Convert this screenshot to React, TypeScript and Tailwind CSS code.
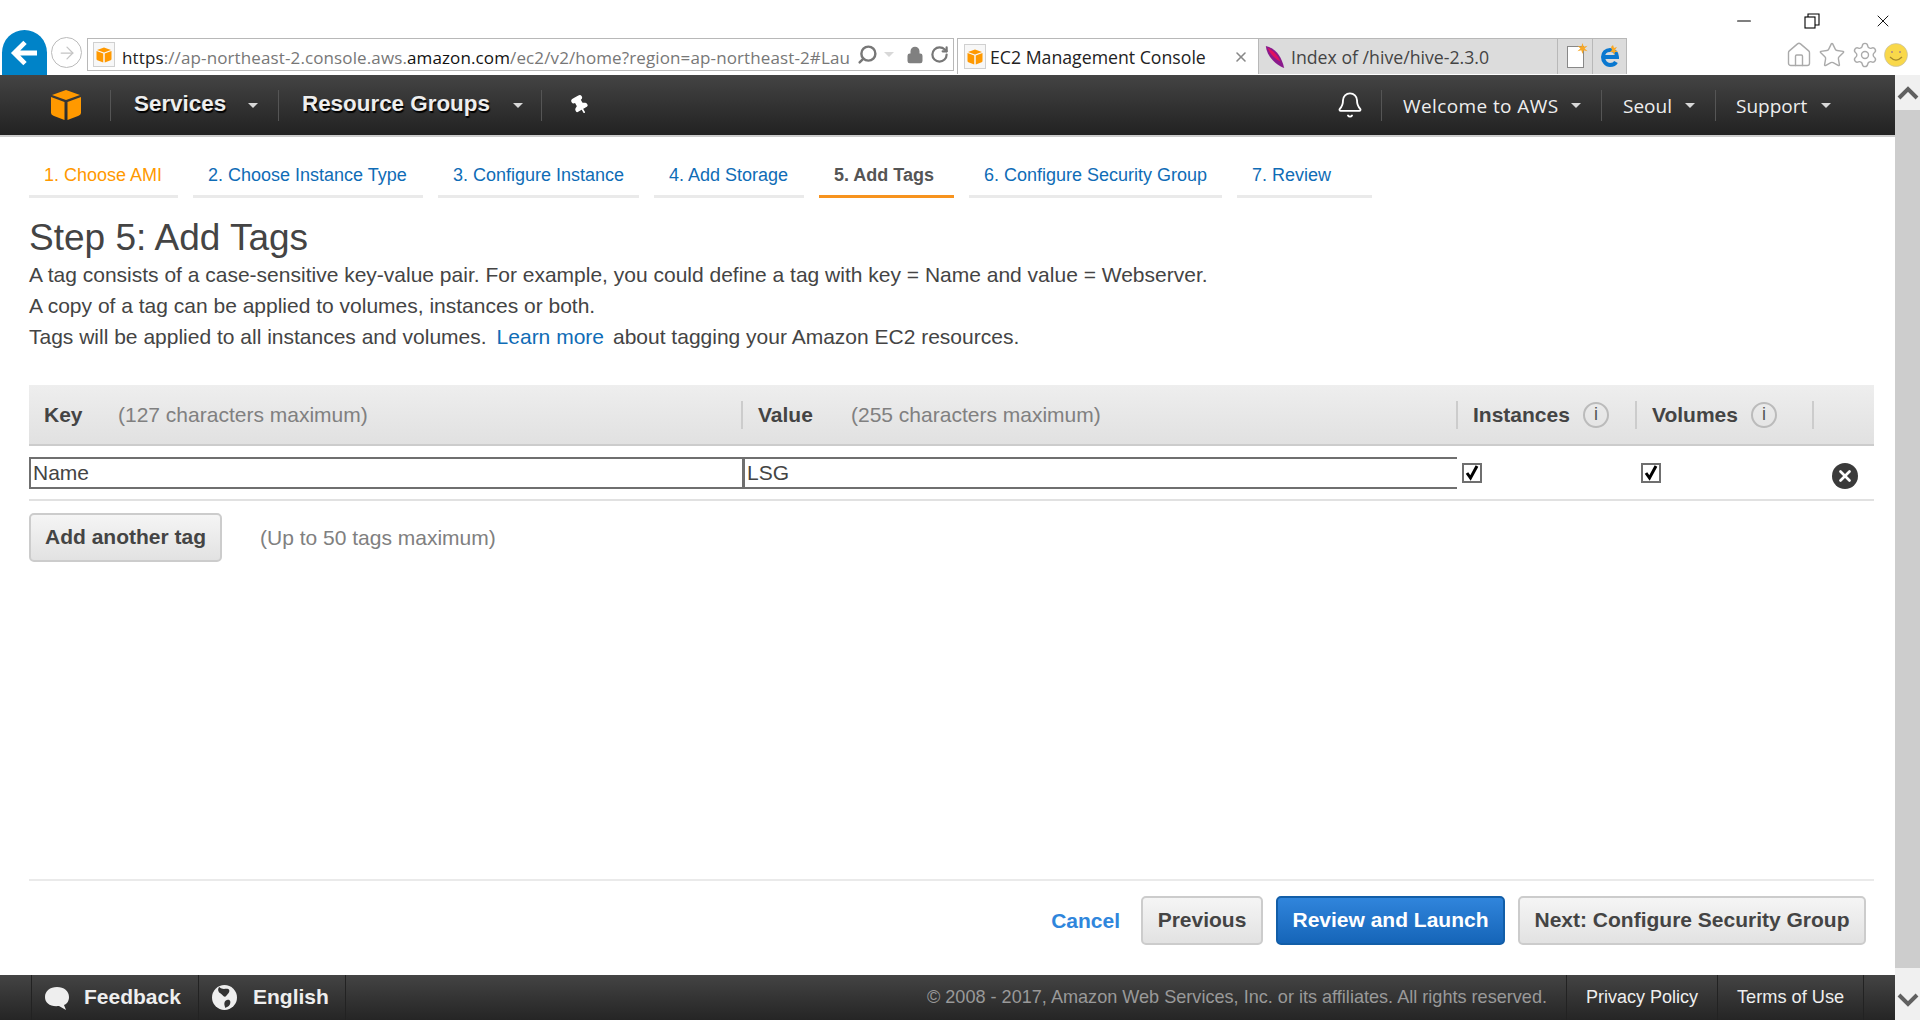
import { Bell, Home, Minus, Pin, RotateCw, Search, Settings, Star, X, Lock, ArrowRight } from "lucide-react"

const arial = "font-['Liberation_Sans',Arial,sans-serif]"

function Cube({ className }: { className?: string }) {
  return (
    <svg viewBox="0 0 32 32" className={className}>
      <path d="M16 1 L30 6 L16 11 L2 6 Z" fill="#f90" />
      <path d="M1 8 L14.5 13 V31 L4 27 Q1 26 1 24 Z" fill="#f90" />
      <path d="M31 8 L17.5 13 V31 L28 27 Q31 26 31 24 Z" fill="#f90" />
    </svg>
  )
}

function PageIcon() {
  return (
    <div className="flex h-[25px] w-[22px] shrink-0 items-center justify-center border border-[#d0d0d0] bg-[#f7f7f7]">
      <Cube className="h-4 w-4" />
    </div>
  )
}

function Spark({ className }: { className?: string }) {
  return (
    <svg viewBox="0 0 12 12" className={className}>
      <path d="M6 0l1.3 4L11.5 3 8.3 6l3.2 3-4.2-1L6 12 4.7 8 .5 9l3.2-3L.5 3l4.2 1Z" fill="#f9a825" />
    </svg>
  )
}

function Caret({ className }: { className?: string }) {
  return <span className={`h-0 w-0 border-x-[5px] border-t-[5px] border-x-transparent border-t-[#d8d8d8] ${className ?? ""}`} />
}

function Sep({ className }: { className?: string }) {
  return <span className={`h-[31px] w-px bg-[#555] ${className ?? ""}`} />
}

function BrowserBar() {
  return (
    <div className="relative h-[75px] shrink-0 bg-white">
      <div className="flex h-[38px] items-center justify-end pt-[4px]">
        <Minus className="mr-[49px] h-[22px] w-[22px] text-black" strokeWidth={1.2} />
        <svg viewBox="0 0 16 16" className="mr-[53px] h-4 w-4" fill="none" stroke="#000" strokeWidth="1.1">
          <rect x="1" y="4" width="10" height="11" />
          <path d="M4 4V1h11v11h-4" />
        </svg>
        <X className="mr-[27px] h-5 w-5 text-black" strokeWidth={1.1} />
      </div>
      <div className="flex h-[37px] items-start">
        <div className="-mt-[8px] ml-[2px] flex h-[45px] w-[45px] items-center justify-center rounded-t-full rounded-b-[20px] bg-[#0083c8]">
          <svg viewBox="0 0 24 24" className="h-8 w-8" fill="none" stroke="#fff" strokeWidth="3.6">
            <path d="M21 12H5M12 4l-8 8 8 8" />
          </svg>
        </div>
        <div className="-mt-[1px] ml-[4px] flex h-[31px] w-[31px] items-center justify-center rounded-full border border-[#bbb]">
          <ArrowRight className="h-5 w-5 text-[#c4c4c4]" strokeWidth={1.5} />
        </div>
        <div className="ml-[5px] flex h-[33px] w-[867px] items-center border border-[#b8b8b8] pl-[5px] font-['Open_Sans',sans-serif] text-[17px] tracking-[0.12px] text-[#777]">
          <PageIcon />
          <span className="ml-[7px] w-[730px] shrink-0 overflow-hidden pt-[6px] whitespace-nowrap">
            <span className="text-[#222]">https</span>://ap-northeast-2.console.aws.<span className="text-[#111]">amazon.com</span>/ec2/v2/home?region=ap-northeast-2#Lau
          </span>
          <Search className="ml-[5px] h-[21px] w-[21px] -scale-x-100 text-[#777]" strokeWidth={2.8} />
          <Caret className="ml-[6px] border-t-[#777]" />
          <Lock className="ml-[12px] h-[18px] w-[18px] fill-[#808080] text-[#808080]" />
          <RotateCw className="ml-[6px] h-[19px] w-[19px] text-[#777]" strokeWidth={2.8} />
        </div>
        <div className="ml-[3px] flex h-[36px] w-[301px] items-center border-t border-l border-[#b8b8b8] pl-[6px] font-['Open_Sans',sans-serif] text-[17.7px] text-[#222]">
          <PageIcon />
          <span className="ml-[4px] pt-[1px] whitespace-nowrap">EC2 Management Console</span>
          <X className="ml-[27px] h-4 w-4 text-[#888]" strokeWidth={2.4} />
        </div>
        <div className="flex h-[36px] w-[300px] items-center border-x border-t border-[#b8b8b8] bg-[#dcdcdc] pl-[5px] font-['Open_Sans',sans-serif] text-[17.7px] text-[#444]">
          <svg viewBox="0 0 24 26" className="h-[24px] w-[22px]">
            <path d="M2 1 C12 3 19 12 22 25 C13 22 3 12 2 1Z" fill="#8a1a8c" />
            <path d="M4 3 C10 6 15 11 18 18 C12 15 6 9 4 3Z" fill="#e0115f" />
          </svg>
          <span className="ml-[5px] pt-[1px] whitespace-nowrap">Index of /hive/hive-2.3.0</span>
        </div>
        <div className="flex h-[36px] w-[35px] items-center justify-center border-t border-r border-[#b8b8b8] bg-[#dcdcdc]">
          <div className="flex h-[22px] w-[17px] justify-end border border-[#888] bg-white">
            <Spark className="-mt-[4px] -mr-[5px] h-[11px] w-[11px]" />
          </div>
        </div>
        <div className="flex h-[36px] w-[34px] items-center justify-center border-t border-r border-[#b8b8b8] bg-[#dcdcdc]">
          <svg viewBox="0 0 24 24" className="h-[24px] w-[24px]">
            <path d="M5 12h14c0-4-3-7-7-7s-7 3-7 7 3 8 7 8c3 0 5-1 6-3" fill="none" stroke="#0a78d0" strokeWidth="4" />
            <path d="M15 0l1 3 3-1-2 3 3 2-3 0-1 3-1-3-3 0 2-2-1-3Z" fill="#f9a825" />
          </svg>
        </div>
        <div className="ml-[158px] flex items-center gap-[5px] pt-[3px]">
          <Home className="h-[28px] w-[28px] text-[#aaa]" strokeWidth={1.2} />
          <Star className="h-[28px] w-[28px] text-[#aaa]" strokeWidth={1.2} />
          <Settings className="h-[28px] w-[28px] text-[#aaa]" strokeWidth={1.2} />
          <svg viewBox="0 0 24 24" className="h-[24px] w-[24px] shrink-0">
            <circle cx="12" cy="12" r="11.5" fill="#f9d84a" stroke="#bbb" strokeWidth="0.6" />
            <circle cx="8" cy="9" r="1" fill="#a88" />
            <circle cx="16" cy="9" r="1" fill="#a88" />
            <path d="M6 14q6 6 12 0" fill="none" stroke="#a6892a" strokeWidth="1.2" />
          </svg>
        </div>
      </div>
    </div>
  )
}

function NavBar() {
  const boldText = "-mt-[2px] font-bold text-[22.4px] text-[#eee] [text-shadow:1px_2px_1px_#000]"
  const lightText = "font-['Open_Sans',sans-serif] text-[19px] text-[#eee] pt-[2px]"
  return (
    <div className={`flex h-[60px] shrink-0 items-center bg-gradient-to-b from-[#444] to-[#222] ${arial}`}>
      <Cube className="ml-[50px] h-[32px] w-[32px]" />
      <Sep className="ml-[28px]" />
      <span className={`ml-[23px] w-[93px] ${boldText}`}>Services</span>
      <Caret className="ml-[21px]" />
      <Sep className="ml-[20px]" />
      <span className={`ml-[23px] w-[191px] whitespace-nowrap ${boldText}`}>Resource Groups</span>
      <Caret className="ml-[20px]" />
      <Sep className="ml-[18px]" />
      <Pin className="ml-[28px] h-[20px] w-[20px] -rotate-30 fill-white text-white" />
      <div className="flex-1" />
      <Bell className="mr-[17px] h-[28px] w-[28px] text-white" strokeWidth={1.6} />
      <Sep />
      <span className={`ml-[21px] w-[158px] tracking-[0.4px] whitespace-nowrap ${lightText}`}>Welcome to AWS</span>
      <Caret className="ml-[10px]" />
      <Sep className="ml-[20px]" />
      <span className={`ml-[21px] w-[49px] ${lightText}`}>Seoul</span>
      <Caret className="ml-[13px]" />
      <Sep className="ml-[20px]" />
      <span className={`ml-[20px] w-[72px] ${lightText}`}>Support</span>
      <Caret className="ml-[13px]" />
      <span className="w-[64px]" />
    </div>
  )
}

const steps = [
  { label: "1. Choose AMI", w: "w-[149px]", color: "text-[#f90]", line: "border-[#eaeaea]" },
  { label: "2. Choose Instance Type", w: "w-[230px]", color: "text-[#0f6cb6]", line: "border-[#eaeaea]" },
  { label: "3. Configure Instance", w: "w-[201px]", color: "text-[#0f6cb6]", line: "border-[#eaeaea]" },
  { label: "4. Add Storage", w: "w-[150px]", color: "text-[#0f6cb6]", line: "border-[#eaeaea]" },
  { label: "5. Add Tags", w: "w-[135px]", color: "text-[#555] font-bold", line: "border-[#f7931e]" },
  { label: "6. Configure Security Group", w: "w-[253px]", color: "text-[#0f6cb6]", line: "border-[#eaeaea]" },
  { label: "7. Review", w: "w-[135px]", color: "text-[#0f6cb6]", line: "border-[#eaeaea]" },
]

function Steps() {
  return (
    <div className="flex gap-[15px] pt-[24px] pl-[29px]">
      {steps.map((step) => (
        <div key={step.label} className={`h-[37px] border-b-[3px] pl-[15px] text-[18px] leading-[28px] whitespace-nowrap ${step.w} ${step.color} ${step.line}`}>
          {step.label}
        </div>
      ))}
    </div>
  )
}

function Info() {
  return (
    <span className={`ml-[13px] flex h-[26px] w-[26px] items-center justify-center rounded-full border-2 border-[#bbb] text-[18px] font-normal text-[#555] ${arial}`}>
      i
    </span>
  )
}

function TagTable() {
  return (
    <div className="mt-[33px] mr-[21px] ml-[29px]">
      <div className="flex h-[61px] items-center border-b-2 border-[#ccc] bg-gradient-to-b from-[#eee] to-[#e1e1e1] text-[21px] text-[#808080]">
        <div className="flex h-[28px] w-[714px] items-center border-r-2 border-[#ccc] pl-[15px]">
          <b className="w-[74px] text-[#444]">Key</b>
          <span>(127 characters maximum)</span>
        </div>
        <div className="flex h-[28px] w-[715px] items-center border-r-2 border-[#ccc] pl-[15px]">
          <b className="w-[93px] text-[#444]">Value</b>
          <span>(255 characters maximum)</span>
        </div>
        <div className="flex h-[28px] w-[179px] items-center border-r-2 border-[#ccc] pl-[15px]">
          <b className="text-[#444]">Instances</b>
          <Info />
        </div>
        <div className="flex h-[28px] w-[177px] items-center border-r-2 border-[#ccc] pl-[15px]">
          <b className="text-[#444]">Volumes</b>
          <Info />
        </div>
      </div>
      <div className="flex h-[55px] items-start border-b-2 border-[#e1e1e1] pt-[11px] text-[21px] text-[#444]">
        <div className="flex h-[32px] w-[715px] items-center border-2 border-[#6f6f6f] pl-[2px]">Name</div>
        <div className="-ml-[1px] flex h-[32px] w-[714px] items-center border-y-2 border-l-2 border-[#6f6f6f] pl-[2px]">LSG</div>
        <Check className="mt-[6px] ml-[5px]" />
        <Check className="mt-[6px] ml-[159px]" />
        <span className="mt-[6px] ml-[171px] flex h-[26px] w-[26px] items-center justify-center rounded-full bg-[#3a3a3a]">
          <X className="h-[18px] w-[18px] text-white" strokeWidth={3.6} />
        </span>
      </div>
    </div>
  )
}

function Check({ className }: { className?: string }) {
  return (
    <span className={`flex h-[20px] w-[20px] shrink-0 items-center justify-center border-2 border-[#6f6f6f] ${className ?? ""}`}>
      <svg viewBox="0 0 16 16" className="h-[16px] w-[16px]" fill="none" stroke="#000" strokeWidth="3">
        <path d="M3 8l3.5 5L13 1" />
      </svg>
    </span>
  )
}

function GrayButton({ children, className }: { children: React.ReactNode; className?: string }) {
  return (
    <button className={`h-[49px] rounded-[5px] border-2 border-[#ccc] bg-gradient-to-b from-[#f5f5f5] to-[#e2e2e2] pb-[2px] text-[21px] font-bold text-[#444] ${className ?? ""}`}>
      {children}
    </button>
  )
}

function Footer() {
  return (
    <div className={`flex h-[45px] shrink-0 items-center bg-gradient-to-b from-[#444] to-[#252525] ${arial}`}>
      <div className="ml-[31px] flex h-full w-[168px] items-center border-x border-[#222] pl-[12px]">
        <svg viewBox="0 0 26 24" className="h-[24px] w-[26px]">
          <path d="M13 1C20 1 25 5 25 11c0 4-2 7-5 8l2 5-7-4C6 21 1 17 1 11 1 5 6 1 13 1Z" fill="#eee" />
        </svg>
        <span className="ml-[14px] pb-[2px] text-[21px] font-bold text-[#eee]">Feedback</span>
      </div>
      <div className="flex h-full w-[147px] items-center border-r border-[#222] pl-[13px]">
        <svg viewBox="0 0 24 24" className="h-[25px] w-[25px]">
          <circle cx="12" cy="12" r="12" fill="#eee" />
          <path d="M7 2c3 3 6 1 9 2 2 2-1 5-3 7-2 1-3-2-5-3C6 7 5 4 7 2ZM13 15c3-2 6 0 4 4-1 2-3 2-4 3-1-2-2-5 0-7Z" fill="#333" />
        </svg>
        <span className="ml-[16px] pb-[2px] text-[21px] font-bold text-[#eee]">English</span>
      </div>
      <span className="ml-auto text-[18.1px] whitespace-nowrap text-[#999]">
        © 2008 - 2017, Amazon Web Services, Inc. or its affiliates. All rights reserved.
      </span>
      <span className="ml-[19px] flex h-full w-[152px] items-center border-x border-[#222] pl-[19px] text-[18px] text-[#eee]">Privacy Policy</span>
      <span className="flex h-full w-[146px] items-center border-r border-[#222] pl-[19px] text-[18.2px] text-[#eee]">Terms of Use</span>
      <span className="w-[31px]" />
    </div>
  )
}

function ScrollBar() {
  return (
    <div className="flex w-[25px] shrink-0 flex-col bg-[#f0f0f0]">
      <div className="flex h-[35px] items-center justify-center">
        <svg viewBox="0 0 22 14" className="h-[14px] w-[22px]" fill="none" stroke="#606060" strokeWidth="4">
          <path d="M2 12l9-9 9 9" />
        </svg>
      </div>
      <div className="flex-1 bg-[#cdcdcd]" />
      <div className="flex h-[52px] items-center justify-center pt-[12px]">
        <svg viewBox="0 0 22 14" className="h-[14px] w-[22px]" fill="none" stroke="#606060" strokeWidth="4">
          <path d="M2 2l9 9 9-9" />
        </svg>
      </div>
    </div>
  )
}

export default function App() {
  return (
    <div className={`flex h-[1020px] w-[1920px] flex-col overflow-hidden bg-white ${arial}`}>
      <BrowserBar />
      <div className="flex min-h-0 flex-1">
        <div className="flex min-w-0 flex-1 flex-col">
          <NavBar />
          <div className="h-[2px] bg-[#ccc]" />
          <div className="flex min-h-0 flex-1 flex-col">
            <Steps />
            <h1 className="mt-[19px] pl-[29px] text-[37px] leading-[42px] text-[#444]">Step 5: Add Tags</h1>
            <div className="pl-[29px] text-[21px] leading-[31px] text-[#444]">
              <p>A tag consists of a case-sensitive key-value pair. For example, you could define a tag with key = Name and value = Webserver.</p>
              <p>A copy of a tag can be applied to volumes, instances or both.</p>
              <p>
                Tags will be applied to all instances and volumes.
                <a className="ml-[10px] text-[#0f6cb6]">Learn more</a>
                <span className="ml-[9px]">about tagging your Amazon EC2 resources.</span>
              </p>
            </div>
            <TagTable />
            <div className="mt-[12px] flex items-center pl-[29px]">
              <GrayButton className="w-[193px]">Add another tag</GrayButton>
              <span className="ml-[38px] text-[21px] text-[#808080]">(Up to 50 tags maximum)</span>
            </div>
            <div className="mt-auto mr-[21px] ml-[29px] flex h-[96px] items-start justify-end border-t-2 border-[#eaeaea] pt-[15px] pr-[8px]">
              <a className="mt-[9px] mr-[21px] text-[21px] font-bold text-[#2f86dc]">Cancel</a>
              <GrayButton className="w-[122px]">Previous</GrayButton>
              <button className="ml-[13px] h-[49px] w-[229px] rounded-[5px] border-2 border-[#125ea8] bg-gradient-to-b from-[#3085dc] to-[#1565b8] pb-[2px] text-[21px] font-bold text-white">
                Review and Launch
              </button>
              <GrayButton className="ml-[13px] w-[348px]">Next: Configure Security Group</GrayButton>
            </div>
          </div>
          <Footer />
        </div>
        <ScrollBar />
      </div>
    </div>
  )
}
